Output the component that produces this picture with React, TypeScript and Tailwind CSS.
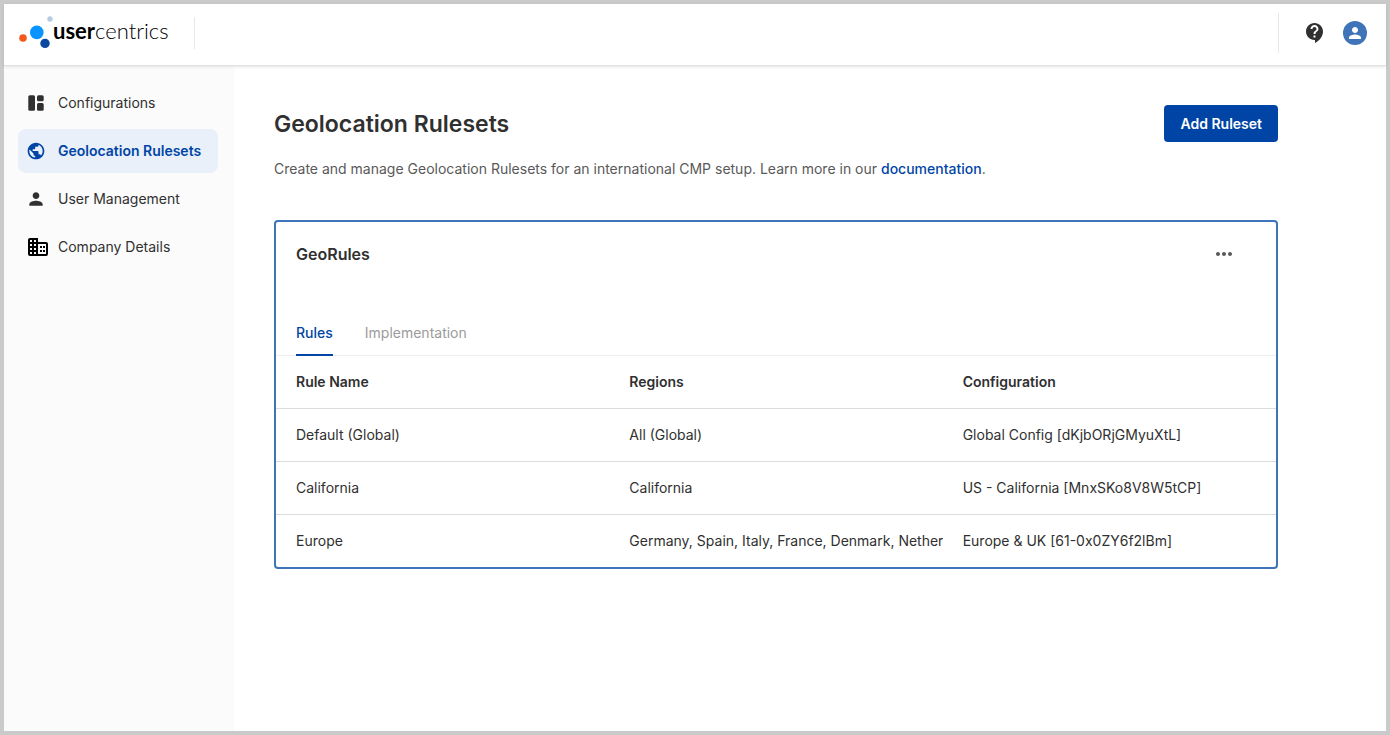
import type { ReactNode } from "react";
import { MdContactSupport, MdMoreHoriz, MdPerson, MdPublic } from "react-icons/md";

type NavItem = { label: string; icon: ReactNode; active?: boolean };

function DashboardIcon() {
  return (
    <svg viewBox="0 0 20 20" className="size-5" fill="currentColor" aria-hidden="true">
      <rect x="2.3" y="2.2" width="6.7" height="15.6" rx="1.5" />
      <rect x="11" y="2.2" width="6.7" height="6" rx="1.5" />
      <rect x="11" y="10" width="6.7" height="7.8" rx="1.5" />
    </svg>
  );
}

function CompanyIcon() {
  return (
    <svg viewBox="0 0 24 24" className="size-6 text-black" aria-hidden="true">
      <g fill="none" stroke="currentColor" strokeWidth="2">
        <path d="M4 4h7v16H4a1 1 0 0 1-1-1V5a1 1 0 0 1 1-1z" />
        <path d="M11 8h9a1 1 0 0 1 1 1v10a1 1 0 0 1-1 1h-9" />
        <path d="M3 8h8M3 12h9M3 16h9M7 4v16" />
      </g>
      <path fill="currentColor" d="M14 11h2v2h-2zM17 11h2v2h-2zM14 15h2v2h-2zM17 15h2v2h-2z" />
    </svg>
  );
}

const navItems: NavItem[] = [
  { label: "Configurations", icon: <DashboardIcon /> },
  { label: "Geolocation Rulesets", icon: <MdPublic className="size-5" />, active: true },
  { label: "User Management", icon: <MdPerson className="size-5" /> },
  { label: "Company Details", icon: <CompanyIcon /> },
];

const rules = [
  { name: "Default (Global)", regions: "All (Global)", config: "Global Config [dKjbORjGMyuXtL]" },
  { name: "California", regions: "California", config: "US - California [MnxSKo8V8W5tCP]" },
  {
    name: "Europe",
    regions: "Germany, Spain, Italy, France, Denmark, Netherlands",
    config: "Europe & UK [61-0x0ZY6f2lBm]",
  },
];

function Logo() {
  return (
    <a href="#" className="flex items-center text-black">
      <svg viewBox="0 0 34 34" className="size-[34px]" aria-hidden="true">
        <circle cx="4" cy="22" r="3.8" fill="#f25a1d" />
        <circle cx="17.8" cy="16.4" r="6.8" fill="#0a94ff" />
        <circle cx="31" cy="3" r="2.7" fill="#b5cce3" />
        <circle cx="26" cy="27.4" r="4.7" fill="#0b479f" />
      </svg>
      <span className="pb-1 font-['Lato',sans-serif] text-[22px] leading-8">
        <b className="font-bold">user</b>
        <span className="font-light">centrics</span>
      </span>
    </a>
  );
}

function Header() {
  return (
    <header className="z-10 flex h-[62px] items-center justify-between border-b border-[#e0e0e0] pr-[19px] pb-[3px] pl-[15px] shadow-[0_1px_3px_rgba(0,0,0,0.1)]">
      <div className="flex h-8 items-center border-r border-[#e8e8e8] pr-[25px]">
        <Logo />
      </div>
      <div className="flex h-10 items-center gap-4 border-l border-[#e8e8e8] pl-6">
        <button type="button" aria-label="Help" className="text-[#303030]">
          <MdContactSupport className="size-6" />
        </button>
        <button
          type="button"
          aria-label="Account"
          className="flex size-6 items-center justify-center rounded-full bg-[#3f74b9] text-white"
        >
          <MdPerson className="size-[18px]" />
        </button>
      </div>
    </header>
  );
}

function Sidebar() {
  return (
    <nav className="flex w-[230px] shrink-0 flex-col gap-1 bg-[#fbfbfb] px-[14px] pt-[15px]">
      {navItems.map((item) => (
        <a
          key={item.label}
          href="#"
          aria-current={item.active ? "page" : undefined}
          className={
            item.active
              ? "flex h-11 w-[200px] items-center rounded-lg bg-[#e9f0f9] pl-2 font-semibold text-[#0045a5]"
              : "flex h-11 w-[200px] items-center rounded-lg pl-2 text-[#303030]"
          }
        >
          <span className="w-8">{item.icon}</span>
          {item.label}
        </a>
      ))}
    </nav>
  );
}

function RulesetCard() {
  return (
    <section className="mt-[41px] rounded border-2 border-[#3f74b9]">
      <div className="flex h-16 items-center justify-between pr-10 pl-5">
        <h2 className="text-base font-semibold">GeoRules</h2>
        <button type="button" aria-label="More actions" className="text-[#595959]">
          <MdMoreHoriz className="size-6" />
        </button>
      </div>
      <div role="tablist" className="mt-6 flex h-[46px] gap-8 border-b border-[#eeeeee] px-5">
        <button
          type="button"
          role="tab"
          aria-selected="true"
          className="-mb-px border-b-2 border-[#0045a5] pt-0.5 font-medium text-[#0045a5]"
        >
          Rules
        </button>
        <button
          type="button"
          role="tab"
          aria-selected="false"
          className="-mb-px border-b-2 border-transparent pt-0.5 text-[#9b9b9b]"
        >
          Implementation
        </button>
      </div>
      <table className="w-full table-fixed text-left">
        <thead>
          <tr className="h-[52px] border-b border-[#dcdcdc]">
            <th className="pl-5 font-semibold">Rule Name</th>
            <th className="pl-5 font-semibold">Regions</th>
            <th className="pl-5 font-semibold">Configuration</th>
          </tr>
        </thead>
        <tbody>
          {rules.map((rule) => (
            <tr key={rule.name} className="h-[53px] border-b border-[#dcdcdc] last:border-b-0">
              <td className="overflow-hidden pl-5 whitespace-nowrap">{rule.name}</td>
              <td className="overflow-hidden pl-5 whitespace-nowrap">{rule.regions}</td>
              <td className="overflow-hidden pl-5 whitespace-nowrap">{rule.config}</td>
            </tr>
          ))}
        </tbody>
      </table>
    </section>
  );
}

export default function App() {
  return (
    <div className="flex min-h-screen flex-col border-4 border-[#cacaca] bg-white font-['Inter',sans-serif] text-sm text-[#303030]">
      <Header />
      <div className="flex grow">
        <Sidebar />
        <main className="min-w-0 grow pt-[39px] pr-27 pl-10">
          <div className="flex items-center justify-between">
            <h1 className="text-[23px] leading-8 font-semibold">Geolocation Rulesets</h1>
            <button type="button" className="h-[37px] rounded bg-[#0045a5] px-4 font-semibold text-white">
              Add Ruleset
            </button>
          </div>
          <p className="mt-[17px] text-[#595959]">
            Create and manage Geolocation Rulesets for an international CMP setup. Learn more in our{" "}
            <a href="#" className="font-medium text-[#0045a5]">
              documentation
            </a>
            .
          </p>
          <RulesetCard />
        </main>
      </div>
    </div>
  );
}
